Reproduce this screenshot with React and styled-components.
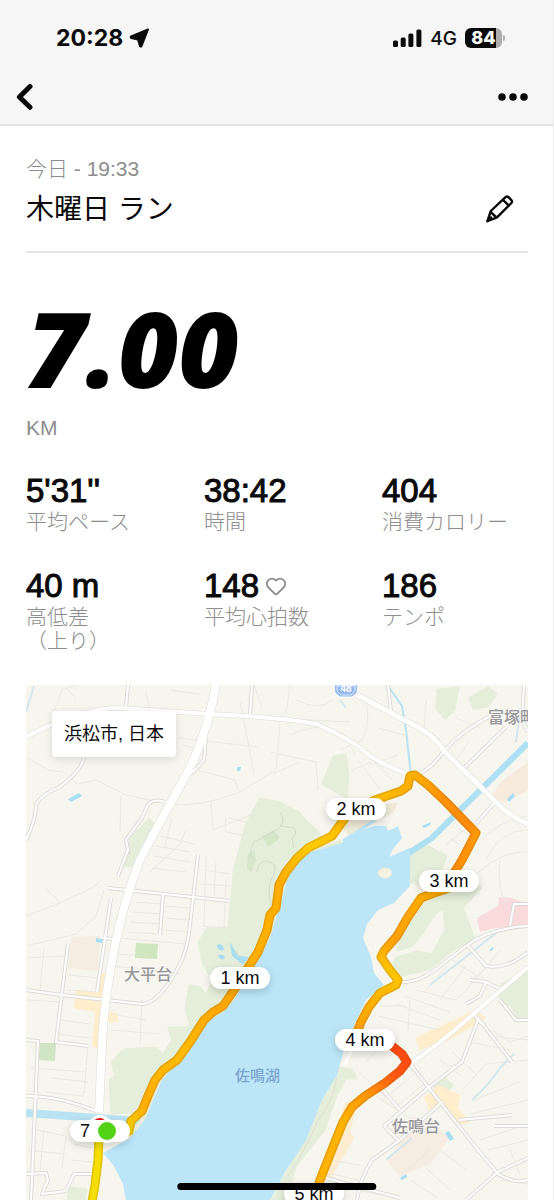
import React from 'react'
import styled, { createGlobalStyle } from 'styled-components'
import { Heart } from 'lucide-react'

const GlobalStyle = createGlobalStyle`
  * {
    box-sizing: border-box;
  }
  body {
    margin: 0;
    background: #fff;
    color: #0a0a0a;
    font-family: 'Liberation Sans', 'Noto Sans CJK JP', sans-serif;
  }
`

const stats = [
  { value: "5'31''", label: '平均ペース' },
  { value: '38:42', label: '時間' },
  { value: '404', label: '消費カロリー' },
  { value: '40 m', label: '高低差\n（上り）' },
  { value: '148', label: '平均心拍数', heart: true },
  { value: '186', label: 'テンポ' }
]

// x and y are in the map's own units, see MAP
const MAP = { x: 26, y: 685, width: 502, height: 515 }

const pins = [
  { label: '1 km', x: 240, y: 978 },
  { label: '2 km', x: 356, y: 809 },
  { label: '3 km', x: 449, y: 881 },
  { label: '4 km', x: 365, y: 1040 },
  { label: '5 km', x: 314, y: 1194 }
]

const greens = [
  'M260 799 L280 803 L298 812 L306 822 L318 832 L322 838 L300 846 L284 872 L276 905 L262 945 L250 962 L240 955 L228 935 L232 900 L234 872 L246 826 Z',
  'M334 757 L345 755 L348 775 L346 797 L323 784 Z',
  'M131 838 L149 820 L154 825 L134 865 L125 866 Z',
  'M207 929 L224 928 L232 945 L240 958 L246 960 L238 985 L226 1000 L206 1014 L192 1030 L186 1008 L190 986 L200 988 L206 996 L214 980 L204 965 L199 943 Z',
  'M124 1050 L155 1048 L163 1055 L173 1040 L169 1028 L185 1028 L196 1026 L176 1056 L158 1072 L146 1094 L136 1112 L112 1113 L110 1080 L116 1076 L112 1062 Z',
  'M438 690 L458 688 L454 710 L445 718 L437 708 Z',
  'M470 698 L488 688 L496 694 L488 706 L474 708 Z',
  'M410 850 L424 845 L446 856 L438 876 L420 884 L411 882 Z',
  'M480 888 L462 886 L446 894 L424 904 L400 938 L398 950 L412 945 L424 930 L436 912 L444 908 L446 930 L432 955 L418 952 L396 958 L393 966 L402 975 L430 968 L452 950 L474 938 L466 918 L462 908 Z',
  'M528 972 L502 984 L500 1000 L512 1006 L516 1016 L528 1018 Z',
  'M323 1082 L340 1068 L352 1070 L356 1078 L346 1078 L336 1095 L324 1130 L296 1165 L284 1200 L272 1200 L300 1150 L322 1105 Z',
  'M434 1085 L445 1078 L452 1086 L440 1095 Z',
  'M70 1188 L86 1190 L84 1200 L68 1200 Z'
]

const blocks = [
  { fill: '#f6ece1', d: 'M72 937 L100 936 L98 971 L68 968 Z' },
  { fill: '#cfe6bf', d: 'M136 943 L158 944 L157 959 L135 958 Z' },
  { fill: '#cfe5c3', d: 'M40 1043 L56 1043 L55 1061 L38 1060 Z' },
  { fill: '#d5e6c9', d: 'M248 854 L254 850 L256 860 L251 873 L247 868 Z M262 836 L274 830 L280 838 L268 847 Z' },
  { fill: '#ffedcb', d: 'M101 973 L108 973 L105 1012 L118 1013 L118 1022 L105 1023 L98 1048 L92 1047 L95 1012 L74 1008 L76 990 L98 992 Z' },
  { fill: '#ffedcb', d: 'M415 1038 L475 1010 L486 1018 L450 1040 L420 1050 Z' },
  { fill: '#ffedcb', d: 'M424 1098 L438 1085 L460 1095 L458 1108 L470 1122 L456 1126 L442 1106 L430 1112 Z' },
  { fill: '#fdeccf', d: 'M345 1103 L360 1097 L350 1130 L354 1138 L330 1180 L325 1176 Z' },
  { fill: '#f6ece1', d: 'M412 1116 L428 1120 L450 1138 L430 1164 L400 1176 L388 1162 Z' },
  { fill: '#f6ebdd', d: 'M528 762 L528 790 L506 802 L490 800 L500 782 Z' },
  { fill: '#f9dbdc', d: 'M477 918 L498 906 L499 897 L512 898 L528 904 L528 926 L496 928 L480 932 Z' },
  { fill: '#eee9d8', d: 'M340 826 L376 806 L398 802 L394 812 L350 836 Z' }
]

const lanes =
  'M54 711 L62 690 L76 685 M66 688 L76 698 M146 692 L150 711 M170 690 L200 694 M216 715 L350 722 M254 685 L262 708 M290 685 L286 714 ' +
  'M182 745 L205 750 M240 702 L250 752 L254 775 M190 768 L235 780 L238 790 M210 706 L212 718 M178 738 L258 747 M280 724 L276 770 L240 792 Q200 808 168 804 ' +
  'M26 757 L48 770 L62 772 L78 784 L96 780 L126 795 L168 804 M121 796 L120 832 M211 802 L213 830 L258 812 M172 818 L164 850 M186 830 L180 844 L150 872 ' +
  'M160 836 L195 844 M156 846 L190 852 M154 856 L190 862 M152 868 L186 872 M228 818 L246 822 M226 832 L246 836 M226 818 L225 832 M270 752 L316 762 L318 790 M273 774 L300 762 M26 916 L60 903 L92 888 L102 880 M46 889 L60 902 M26 946 L76 934 L96 916 L104 890 ' +
  'M132 912 L162 914 M130 922 L160 924 M128 932 L158 934 M138 892 L162 894 M136 902 L162 904 M168 894 L190 896 M166 906 L190 908 M166 918 L188 920 M165 930 L186 932 ' +
  'M206 856 L204 926 M216 862 L214 896 M226 880 L224 926 M204 870 L230 874 M200 884 L230 886 M202 926 L228 928 M118 938 L186 944 M117 954 L134 955 M114 966 L180 974 M112 1014 L146 1020 M110 1030 L160 1034 M142 1000 L140 1044 ' +
  'M26 958 L68 956 M44 948 L40 992 M68 975 L100 978 M66 990 L96 992 M26 1000 L62 1002 M60 1020 L90 1024 M58 1034 L90 1038 M30 1068 L86 1072 M52 1078 L88 1082 M44 1092 L84 1096 M88 1045 L84 1094 ' +
  'M36 1130 L66 1136 L62 1168 M44 1130 L40 1170 M28 1150 L64 1154 M74 1144 L92 1148 M72 1160 L92 1162 M296 700 Q320 712 332 700 M290 735 Q320 720 345 735 L355 755 M365 700 Q372 720 362 740 L340 750 M378 728 L404 735 M426 700 L424 728 L440 740 M456 718 L480 728 M470 740 L456 760 ' +
  'M358 760 L380 790 M366 752 L392 780 M370 765 L398 755 M352 770 L372 762 M440 830 L462 812 M446 845 L468 826 M450 838 L460 845 M458 828 L470 836 M482 840 Q500 820 528 816 M486 860 Q500 830 528 830 M500 860 Q496 890 508 905 M470 880 Q500 850 528 852 ' +
  'M416 990 L455 1000 Q470 990 476 975 L452 960 M404 996 L450 1012 M396 1004 L440 1020 M410 1000 L408 1030 M424 992 L448 965 M440 1000 L466 966 M380 1006 L406 1006 M378 1016 L440 1030 M476 980 L500 950 M466 990 L486 966 ' +
  'M356 1070 L390 1100 M366 1062 L376 1050 M382 1100 L420 1070 M394 1108 L432 1078 M376 1096 L412 1120 M440 1060 L460 1075 M452 1052 L476 1074 M468 1042 L510 1050 M488 1036 L528 1040 M462 1090 L486 1064 L528 1060 M474 1100 L520 1082 ' +
  'M470 1114 L528 1100 M492 1030 L510 1042 L528 1036 M480 1140 L528 1124 M488 1150 L528 1140 M440 1150 L466 1170 M426 1168 L450 1190 M410 1180 L438 1198 M396 1180 L430 1150 M330 1160 L360 1165 M324 1172 L358 1180 M316 1180 L380 1195 M500 1180 L528 1184 M510 1150 L520 1175'

const streets = [
  'M128 685 L126 707',
  'M84 756 Q84 768 60 787 Q40 795 36 805 Q36 820 26 840',
  'M206 737 L204 760 Q196 770 190 774',
  'M165 802 Q155 798 148 804 L142 818 L126 840 L128 850 L118 876',
  'M252 685 L250 714',
  'M198 855 L190 925 Q188 945 182 960 Q160 1004 142 1004 L62 995 L26 990',
  'M108 888 L230 901',
  'M163 894 L160 934',
  'M111 898 L97 992',
  'M103 938 L113 939',
  'M68 944 L56 1042 L88 1046',
  'M26 1040 L38 1041 L31 1200',
  'M26 1096 Q60 1096 98 1112',
  'M26 1174 L46 1173 L48 1180 L42 1194 L66 1191 L74 1174 L94 1174',
  'M388 685 L391 712',
  'M524 685 L522 720 L528 732',
  'M418 774 Q430 770 444 751 Q460 732 490 716',
  'M465 767 L506 727',
  'M475 825 L495 802',
  'M398 982 Q418 984 440 966 L466 946 Q490 928 528 926',
  'M510 926 L514 904 L528 904',
  'M468 946 L486 966 Q506 970 528 952',
  'M466 1004 L480 996 L486 982 L470 980 M486 982 L498 988',
  'M410 1064 L474 1145 L498 1174 Q514 1184 528 1180',
  'M478 1020 L462 1062 L428 1088 L384 1126 L398 1140 M462 1062 Q458 1066 452 1068',
  'M478 1018 L512 1062 M500 1000 L516 1020 L528 1020 M472 1012 L482 1024',
  'M382 1089 L400 1110',
  'M442 1102 L400 1140 L372 1160 Q360 1178 357 1200',
  'M459 1120 L512 1115 M494 1126 L528 1126',
  'M466 1200 L498 1172 L528 1158',
  'M326 1178 L400 1198'
]

const roads = [
  { width: 4, d: 'M26 737 Q80 708 118 708 L210 714 Q290 718 316 724 Q350 738 370 756 Q390 768 408 774' },
  { width: 5, d: 'M352 692 L404 720 Q432 732 444 751 L500 806 Q512 818 528 824' },
  { width: 4, d: 'M410 1064 Q440 1044 478 1010 L528 967' },
  { width: 8, d: 'M216 685 Q208 730 190 768 Q152 836 140 860 Q124 900 114 950 Q104 1000 102 1045 L99 1112' }
]

const lake =
  'M342 843 L352 834 L374 826 L386 826 L388 831 L398 826 L402 838 L393 849 L389 857 L410 848 L410 886 L394 903 L378 910 L367 924 L363 938 L371 957 L374 973 L384 985 L366 1000 L354 1026 L344 1050 L337 1075 L322 1100 L306 1140 L285 1172 L270 1200 L126 1200 L123 1184 L114 1166 L103 1153 L130 1138 L146 1118 L154 1098 L162 1080 L176 1064 L192 1044 L206 1022 L222 1013 L234 1000 L250 972 L270 938 L276 918 L283 896 L287 880 L296 863 L310 852 Z'

const shore =
  'M342 843 L310 852 L296 863 L287 880 L283 896 L276 918 L270 938 L250 972 L234 1000 L222 1013 L206 1022 L192 1044 L176 1064 L162 1080 L154 1098 L146 1118 L130 1138'

const routes = [
  { stroke: 'url(#climb)', d: 'M118 1136 L129 1131 L131 1121 L142 1111 L148 1096 L155 1080 L163 1070 L177 1060 L190 1042 L204 1020 L213 1012 L223 1006 L232 993 L246 971 L258 952 L267 930 L270 915 L276 908 L279 885 L286 872 L297 858 L308 848 L332 836 L345 818 L356 808' },
  { stroke: 'url(#bridge)', d: 'M356 808 L378 799 L401 791 L408 786 L410 776 L415 775 L428 785 L446 802 L476 833 L462 860 L449 881' },
  { stroke: 'url(#east)', d: 'M449 888 L434 893 L421 898 L408 917 L397 936 L384 951 L381 957 L390 970 L398 980 L396 985 L380 993 L369 1007 L361 1022 L354 1040' },
  { stroke: 'url(#sprint)', d: 'M380 1040 L392 1046 L402 1054 L407 1062 L400 1071 L385 1083 L365 1096 L352 1107 L343 1122 L331 1152 L320 1180 L314 1200' },
  { stroke: '#f6df00', d: 'M99 1136 L98 1160 L95 1185 L92 1202' }
]

const places = [
  { name: '富塚町', x: 488, y: 723 },
  { name: '大平台', x: 124, y: 980 },
  { name: '佐鳴台', x: 392, y: 1132 },
  { name: '佐鳴湖', x: 235, y: 1081, water: true }
]

const RouteMap = () => (
  <MapDrawing
    viewBox={`${MAP.x} ${MAP.y} ${MAP.width} ${MAP.height}`}
    aria-label="佐鳴湖"
  >
    <defs>
      <linearGradient id="climb" gradientUnits="userSpaceOnUse" x1="128" y1="1134" x2="350" y2="815">
        <stop offset="0" stopColor="#f4d800" />
        <stop offset="0.08" stopColor="#ffad05" />
        <stop offset="0.25" stopColor="#ffbb00" />
        <stop offset="0.4" stopColor="#fda706" />
        <stop offset="0.6" stopColor="#ffb000" />
        <stop offset="0.75" stopColor="#ffad00" />
        <stop offset="0.88" stopColor="#ffcb00" />
        <stop offset="1" stopColor="#ffb800" />
      </linearGradient>
      <linearGradient id="bridge" gradientUnits="userSpaceOnUse" x1="365" y1="805" x2="476" y2="845">
        <stop offset="0" stopColor="#ffc400" />
        <stop offset="0.3" stopColor="#fdae04" />
        <stop offset="0.6" stopColor="#ff9209" />
        <stop offset="0.9" stopColor="#ff8b09" />
        <stop offset="1" stopColor="#ff9d08" />
      </linearGradient>
      <linearGradient id="east" gradientUnits="userSpaceOnUse" x1="430" y1="885" x2="380" y2="1035">
        <stop offset="0" stopColor="#ffb000" />
        <stop offset="0.4" stopColor="#ff9f08" />
        <stop offset="0.6" stopColor="#ffc500" />
        <stop offset="1" stopColor="#fba006" />
      </linearGradient>
      <linearGradient id="sprint" gradientUnits="userSpaceOnUse" x1="408" y1="1056" x2="325" y2="1180">
        <stop offset="0" stopColor="#ff4a12" />
        <stop offset="0.15" stopColor="#ff5412" />
        <stop offset="0.35" stopColor="#ff9309" />
        <stop offset="0.6" stopColor="#ffb200" />
        <stop offset="1" stopColor="#ffb300" />
      </linearGradient>
    </defs>
    <rect x="26" y="685" width="502" height="515" fill="#f6f5ee" />
    <g fill="#e4eedb" stroke="#e4eedb" strokeWidth="3" strokeLinejoin="round">
      {greens.map(d => (
        <path key={d} d={d} />
      ))}
    </g>
    {blocks.map(b => (
      <path key={b.d} d={b.d} fill={b.fill} />
    ))}
    <path d={lanes} fill="none" stroke="#e9e8e2" strokeWidth="1" />
    <path d="M280 812 Q286 822 280 826 L294 828 Q298 834 292 838 L294 848 M280 828 Q262 838 254 842 Q248 852 252 858 M257 872 Q258 860 268 861 Q280 864 272 878 Q266 890 272 906 M244 960 L232 948" fill="none" stroke="#d3dccb" strokeWidth="1" />
    <path d="M410 848 L436 834 L430 818 L410 795 L400 800 L396 824 L402 838 Z M355 838 Q380 822 396 826" fill="#f6f5ee" />
    {/* streams and ponds */}
    <path d="M388 686 L402 706 L406 730 L411 776" fill="none" stroke="#b9e2ee" strokeWidth="2" />
    <path d="M340 700 L346 708 M26 712 L34 686 M516 742 L520 712 M430 985 L500 930 M386 1160 L412 1138 M472 1100 Q488 1086 500 1068 L514 1054" fill="none" stroke="#d3e7ee" strokeWidth="2" />
    <path d="M26 1113 L140 1121" stroke="#b9e2f3" strokeWidth="8" fill="none" />
    <path d="M392 864 L432 838 L528 743" stroke="#aee0f3" strokeWidth="6" fill="none" />
    <path d="M68 799 L79 793 L82 796 L71 802 Z M237 767 L241 767 L240 771 L237 771 Z M96 938 L103 939 L102 943 L96 942 Z M217 945 Q223 942 224 950 Q217 952 217 945 M218 955 Q224 953 225 958 Q220 962 218 955 M230 942 L238 956 L249 957 L243 965 L232 956 Z M507 799 L513 793 L515 796 L509 802 Z M422 826 L431 822 L430 825 L424 828 Z M489 950 L493 947 L494 949 L491 951 Z M445 1133 L449 1131 L454 1139 L450 1141 Z M400 1178 L406 1174 L407 1177 L402 1180 Z" fill="#a9def2" />
    <path d={shore} fill="none" stroke="#e9ecd7" strokeWidth="7" />
    <path d={lake} fill="#bce6f8" />
    <path d="M343 841 Q360 830 375 820" fill="none" stroke="#bce6f8" strokeWidth="3" />
    <ellipse cx="385" cy="873" rx="7" ry="5" fill="#f4f2e3" stroke="#e7ecd8" />
    <path d="M337 1078 Q332 1104 318 1120 Q306 1150 288 1176" fill="none" stroke="#e2ddcf" strokeWidth="1" />
    <path d="M366 1020 L344 1066" fill="none" stroke="#fff" strokeWidth="3" />
    <g fill="none" strokeLinejoin="round">
      {streets.map(d => (
        <path key={d} d={d} stroke="#dcdbd6" strokeWidth="4" />
      ))}
      {roads.map(r => (
        <path key={r.d} d={r.d} stroke="#dddcd7" strokeWidth={r.width + 1} />
      ))}
      {streets.map(d => (
        <path key={d} d={d} stroke="#fff" strokeWidth="2" />
      ))}
      {roads.map(r => (
        <path key={r.d} d={r.d} stroke="#fff" strokeWidth={r.width} />
      ))}
    </g>
    <path d="M334 685 L358 685 L357 693 L352 697 L340 697 L335 693 Z" fill="#94b9ec" stroke="#fff" strokeWidth="1" />
    <path d="M337 686 L355 686 L355 691 L351 695 L341 695 L337 691 Z" fill="none" stroke="#dce8fa" strokeWidth="1" />
    <Shield x="346" y="692" textAnchor="middle">48</Shield>
    {places.map(p => (
      <Place key={p.name} x={p.x} y={p.y} $water={p.water}>
        {p.name}
      </Place>
    ))}
    <g fill="none" strokeLinejoin="round" strokeLinecap="butt">
      {routes.map(r => (
        <g key={r.d}>
          <path d={r.d} stroke={r.stroke} strokeWidth="9" />
          <path d={r.d} stroke="#8a5a00" strokeOpacity="0.22" strokeWidth="9" />
          <path d={r.d} stroke={r.stroke} strokeWidth="6" />
        </g>
      ))}
    </g>
  </MapDrawing>
)

const App = () => (
  <Screen>
    <GlobalStyle />
    <Header>
      <StatusBar>
        <Clock>
          20:28
          <svg width="21" height="20" viewBox="0 0 21 20" aria-hidden="true">
            <path
              d="M19 1.4 L2.2 8.4 Q1.2 9.2 2.2 9.9 L9 11.4 L11 18.2 Q11.8 19.2 12.6 18 Z"
              fill="#0a0a0a"
              stroke="#0a0a0a"
              strokeWidth="2"
              strokeLinejoin="round"
            />
          </svg>
        </Clock>
        <Signals>
          <svg width="29" height="19" viewBox="0 0 29 19" fill="#0a0a0a" aria-hidden="true">
            <rect x="0" y="11.5" width="5" height="6.5" rx="1.5" />
            <rect x="7.7" y="8.5" width="5" height="9.5" rx="1.5" />
            <rect x="15.4" y="4.5" width="5" height="13.5" rx="1.5" />
            <rect x="23.4" y="0.5" width="5" height="17.5" rx="1.5" />
          </svg>
          <Network>4G</Network>
          <Battery>84</Battery>
        </Signals>
      </StatusBar>
      <Nav>
        <IconButton aria-label="戻る">
          <svg width="20" height="28" viewBox="0 0 20 28" fill="none" stroke="#0a0a0a">
            <path d="M15 3.5 L4.4 14 L15 24.3" strokeWidth="5" strokeLinecap="round" strokeLinejoin="round" />
          </svg>
        </IconButton>
        <IconButton aria-label="メニュー">
          <svg width="30" height="10" viewBox="0 0 30 10" fill="#0a0a0a">
            <circle cx="4" cy="5" r="3.8" />
            <circle cx="15" cy="5" r="3.8" />
            <circle cx="26" cy="5" r="3.8" />
          </svg>
        </IconButton>
      </Nav>
    </Header>
    <Main>
      <Heading>
        <div>
          <DateLine>今日 - 19:33</DateLine>
          <Title>木曜日 ラン</Title>
        </div>
        <EditButton aria-label="編集">
          <svg width="30" height="30" viewBox="0 0 30 30" fill="none" stroke="#0a0a0a" strokeWidth="2.4" strokeLinejoin="round" strokeLinecap="round">
            <path d="M2.4 27.2 L5.8 17 L20.5 3.2 Q22 2 23.5 3.2 L26.4 6.2 Q27.6 7.6 26.4 9 L12 23.3 Z" />
            <path d="M18 5.8 L23.8 11.6" />
            <path d="M5.8 18.2 L11 23" />
            <path d="M2.6 27 L6 23.4" />
          </svg>
        </EditButton>
      </Heading>
      <Distance>7.00</Distance>
      <Unit>KM</Unit>
      <Stats>
        {stats.map(s => (
          <Stat key={s.label}>
            <Label>{s.label}</Label>
            <Value>
              {s.value}
              {s.heart && <Heart size={22} color="#8d8d8d" strokeWidth={2} />}
            </Value>
          </Stat>
        ))}
      </Stats>
      <Map>
        <RouteMap />
        <Region>浜松市, 日本</Region>
        {pins.map(p => (
          <Pin key={p.label} $x={p.x} $y={p.y}>
            {p.label}
          </Pin>
        ))}
        <Dot $x={100} $y={1127} $color="#e00f1b" />
        <Pin $x={100} $y={1131} $start>
          7
        </Pin>
        <Dot $x={107} $y={1131} $color="#51d313" />
      </Map>
    </Main>
    <HomeBar />
  </Screen>
)

const Screen = styled.div`
  min-height: 100vh;
  overflow: hidden;
  border-right: 1px solid #ececec;
`

const Header = styled.header`
  background: #f6f6f6;
  border-bottom: 2px solid #e3e3e3;
`

const StatusBar = styled.div`
  display: flex;
  justify-content: space-between;
  align-items: center;
  height: 72px;
  padding: 4px 48px 0 56px;
  font-family: Inter, sans-serif;
`

const Clock = styled.div`
  display: flex;
  align-items: center;
  gap: 6px;
  font-size: 23px;
  font-weight: 700;
`

const Signals = styled.div`
  display: flex;
  align-items: center;
  gap: 8px;
`

const Network = styled.span`
  font-size: 19px;
  font-weight: 500;
`

const Battery = styled.span`
  position: relative;
  width: 37px;
  height: 20px;
  margin-right: 3px;
  border-radius: 6px;
  background: linear-gradient(to right, #0a0a0a 84%, #adadad 84%);
  color: #fff;
  font-size: 18px;
  font-weight: 800;
  line-height: 20px;
  text-align: center;

  &::after {
    content: '';
    position: absolute;
    top: 7px;
    right: -3px;
    width: 2px;
    height: 6px;
    border-radius: 0 2px 2px 0;
    background: #b4b4b4;
  }
`

const Nav = styled.nav`
  display: flex;
  justify-content: space-between;
  align-items: center;
  height: 52px;
  padding: 0 25px 2px 15px;
`

const IconButton = styled.button`
  display: flex;
  padding: 0;
  border: 0;
  background: none;
  cursor: pointer;
`

const Main = styled.main`
  padding: 28px 25px 0 26px;
`

const Heading = styled.div`
  display: flex;
  justify-content: space-between;
  align-items: flex-end;
  padding-bottom: 17px;
  border-bottom: 2px solid #e5e5e5;
`

const DateLine = styled.p`
  margin: 0;
  color: #8d8d8d;
  font-size: 21px;
  font-weight: 300;
  line-height: 30px;
`

const Title = styled.h1`
  margin: 2px 0 0;
  font-size: 28px;
  font-weight: 400;
  line-height: 48px;
`

const EditButton = styled(IconButton)`
  padding: 10px 13px 10px 10px;
`

const Distance = styled.div`
  margin-top: 45px;
  font-family: 'Open Sans', sans-serif;
  font-size: 104px;
  font-style: italic;
  font-weight: 800;
  line-height: 100px;
  color: #000;
`

const Unit = styled.div`
  margin-top: 18px;
  color: #8d8d8d;
  font-size: 21px;
  line-height: 24px;
`

const Stats = styled.dl`
  display: grid;
  grid-template-columns: repeat(3, 1fr);
  gap: 36px 32px;
  margin: 35px 0 32px;
`

const Stat = styled.div`
  display: flex;
  flex-direction: column-reverse;
  justify-content: flex-end;
  gap: 3px;
`

const Value = styled.dd`
  display: flex;
  align-items: center;
  gap: 6px;
  margin: 0;
  font-size: 33px;
  line-height: 32px;
  -webkit-text-stroke: 1px #0a0a0a;
`

const Label = styled.dt`
  color: #8d8d8d;
  font-size: 21px;
  font-weight: 300;
  line-height: 24px;
  white-space: pre-line;
`

const Map = styled.section`
  position: relative;
  overflow: hidden;
  aspect-ratio: ${MAP.width} / ${MAP.height};
  border-radius: 4px 4px 0 0;
`

const MapDrawing = styled.svg`
  display: block;
  width: 100%;
  height: 100%;
`

const Place = styled.text`
  fill: ${p => (p.$water ? '#7ba4cf' : '#96969a')};
  stroke: ${p => (p.$water ? 'none' : '#f8f7f2')};
  stroke-width: 2px;
  paint-order: stroke;
  font-family: 'Noto Sans CJK JP', sans-serif;
  font-size: ${p => (p.$water ? 15 : 16)}px;
  font-weight: 500;
`

const Shield = styled.text`
  fill: #fff;
  font-family: 'Liberation Sans', sans-serif;
  font-size: 10px;
  font-weight: 700;
`

const Region = styled.div`
  position: absolute;
  top: 26px;
  left: 26px;
  padding: 0 12px;
  border-radius: 4px;
  background: #fff;
  box-shadow: 0 2px 8px rgba(0, 0, 0, 0.12);
  font-size: 18px;
  line-height: 46px;
`

const Pin = styled.span`
  position: absolute;
  left: ${p => ((p.$x - MAP.x) / MAP.width) * 100}%;
  top: ${p => ((p.$y - MAP.y) / MAP.height) * 100}%;
  width: 60px;
  padding: ${p => (p.$start ? '0 10px' : '0')};
  border-radius: 11px;
  background: #fff;
  box-shadow: 0 3px 8px rgba(0, 0, 0, 0.18);
  font-size: 18px;
  line-height: 22px;
  text-align: ${p => (p.$start ? 'left' : 'center')};
  transform: translate(-50%, -50%);
`

const Dot = styled.span`
  position: absolute;
  left: ${p => ((p.$x - MAP.x) / MAP.width) * 100}%;
  top: ${p => ((p.$y - MAP.y) / MAP.height) * 100}%;
  width: 24px;
  height: 24px;
  border: 3px solid #fff;
  border-radius: 50%;
  background: ${p => p.$color};
  transform: translate(-50%, -50%);
`

const HomeBar = styled.div`
  position: fixed;
  bottom: 10px;
  left: 50%;
  width: 36%;
  height: 7px;
  border-radius: 4px;
  background: #000;
  transform: translateX(-50%);
`

export default App
